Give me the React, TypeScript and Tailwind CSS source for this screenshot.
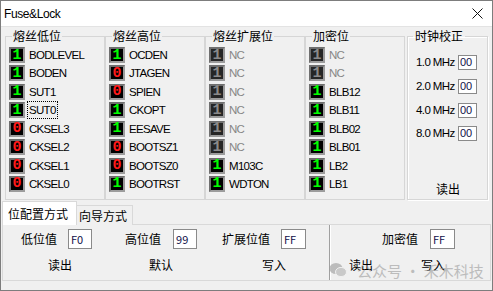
import React from 'react';

type Bit = { name: string; v: 0 | 1; off?: boolean; focus?: boolean };

const UI = '"Liberation Sans", "Noto Sans CJK SC", sans-serif';
const CJK = '"Noto Sans CJK SC", "Liberation Sans", sans-serif';

const GROUPS: { title: string; bits: Bit[] }[] = [
  {
    title: '熔丝低位',
    bits: [
      { name: 'BODLEVEL', v: 1 },
      { name: 'BODEN', v: 1 },
      { name: 'SUT1', v: 1 },
      { name: 'SUT0', v: 1, focus: true },
      { name: 'CKSEL3', v: 0 },
      { name: 'CKSEL2', v: 0 },
      { name: 'CKSEL1', v: 0 },
      { name: 'CKSEL0', v: 0 },
    ],
  },
  {
    title: '熔丝高位',
    bits: [
      { name: 'OCDEN', v: 1 },
      { name: 'JTAGEN', v: 0 },
      { name: 'SPIEN', v: 0 },
      { name: 'CKOPT', v: 1 },
      { name: 'EESAVE', v: 1 },
      { name: 'BOOTSZ1', v: 0 },
      { name: 'BOOTSZ0', v: 0 },
      { name: 'BOOTRST', v: 1 },
    ],
  },
  {
    title: '熔丝扩展位',
    bits: [
      { name: 'NC', v: 1, off: true },
      { name: 'NC', v: 1, off: true },
      { name: 'NC', v: 1, off: true },
      { name: 'NC', v: 1, off: true },
      { name: 'NC', v: 1, off: true },
      { name: 'NC', v: 1, off: true },
      { name: 'M103C', v: 1 },
      { name: 'WDTON', v: 1 },
    ],
  },
  {
    title: '加密位',
    bits: [
      { name: 'NC', v: 1, off: true },
      { name: 'NC', v: 1, off: true },
      { name: 'BLB12', v: 1 },
      { name: 'BLB11', v: 1 },
      { name: 'BLB02', v: 1 },
      { name: 'BLB01', v: 1 },
      { name: 'LB2', v: 1 },
      { name: 'LB1', v: 1 },
    ],
  },
];

const CLOCKS = ['1.0 MHz', '2.0 MHz', '4.0 MHz', '8.0 MHz'];

function BitBox({ b }: { b: Bit }) {
  const color = b.off ? 'text-[#8a8a8a]' : b.v ? 'text-[#00ff00]' : 'text-[#ff1a1a]';
  return (
    <div
      className={`w-[16px] h-[16px] border-2 border-t-[#6f6f6f] border-l-[#6f6f6f] border-b-[#9c9c9c] border-r-[#9c9c9c] flex items-center justify-center ${b.off ? 'bg-[#262626]' : 'bg-black'}`}
    >
      <span className={`text-[15px] leading-none font-bold ${color}`} style={{ fontFamily: '"Liberation Mono", monospace' }}>
        {b.v}
      </span>
    </div>
  );
}

function ValBox({ v, w = 'w-[24px]' }: { v: string; w?: string }) {
  return (
    <div className={`${w} h-[20px] bg-white border border-[#8a8a8a] pl-[2px] flex items-center text-[11px] text-[#10104a]`}>
      {v}
    </div>
  );
}

export default function App() {
  return (
    <div className="w-[493px] h-[291px] bg-[#f0f0f0] border border-[#7d7d7d] relative overflow-hidden text-black" style={{ fontFamily: UI }}>
      {/* title bar */}
      <div className="h-[26px] bg-white flex items-center justify-between pl-[3px] pr-[9px] border-b border-[#e3e3e3]">
        <span className="text-[12px] tracking-[-0.4px]">Fuse&amp;Lock</span>
        <svg width="11" height="11" viewBox="0 0 11 11">
          <path d="M0.5 0.5 L10.5 10.5 M10.5 0.5 L0.5 10.5" stroke="#111" strokeWidth="1" />
        </svg>
      </div>

      {/* groups */}
      <div className="flex mt-[2px] ml-[4px]">
        {GROUPS.map(g => (
          <fieldset key={g.title} className="w-[100px] h-[171px] border border-[#d6d6d6] px-[3px]">
            <legend className="ml-[3px] px-[1px] text-[12px] leading-[14px]" style={{ fontFamily: CJK }}>
              {g.title}
            </legend>
            <div className="mt-[4px]">
              {g.bits.map((b, i) => (
                <div key={i} className="h-[18.43px] flex items-start gap-[4px]">
                  <BitBox b={b} />
                  <span
                    className={`text-[11.5px] leading-[16px] tracking-[-0.7px] px-[1px] -ml-[1px] ${b.off ? 'text-[#868686]' : 'text-black'} ${b.focus ? 'outline outline-1 outline-dotted outline-black' : ''}`}
                  >
                    {b.name}
                  </span>
                </div>
              ))}
            </div>
          </fieldset>
        ))}

        {/* clock calibration */}
        <fieldset className="ml-[2px] w-[81px] h-[171px] border border-[#d6d6d6] shadow-[inset_1px_1px_0_#ffffff,1px_1px_0_#ffffff] pl-[8px] pr-[10px]">
          <legend className="-ml-[3px] px-[2px] text-[12px] leading-[14px]" style={{ fontFamily: CJK }}>
            时钟校正
          </legend>
          <div className="mt-[8px]">
            {CLOCKS.map(c => (
              <div key={c} className="h-[23.67px] flex items-center justify-between">
                <span className="text-[11.5px] tracking-[-0.6px]">{c}</span>
                <div className="w-[19px] h-[15px] bg-white border border-[#8a8a8a] pl-[1px] flex items-center text-[11px] leading-none text-[#10104a]">
                  00
                </div>
              </div>
            ))}
          </div>
          <div className="mt-[35px] ml-[20px] text-[12px] leading-[16px]" style={{ fontFamily: CJK }}>
            读出
          </div>
        </fieldset>
      </div>

      {/* tabs */}
      <div className="flex items-end h-[24px] mt-[1px] ml-[1px] text-[12px]" style={{ fontFamily: CJK }}>
        <div className="w-[75px] h-[24px] bg-white border border-[#d9d9d9] border-b-0 pl-[5px] leading-[24px] relative z-10">
          位配置方式
        </div>
        <div className="w-[56px] h-[20px] bg-[#f0f0f0] border border-[#d9d9d9] border-l-0 border-b-0 pl-[2px] leading-[19px]">
          向导方式
        </div>
      </div>

      {/* tab panel */}
      <div className="ml-[1px] w-[489px] h-[57px] border border-[#d9d9d9] -mt-px flex text-[12px]" style={{ fontFamily: CJK }}>
        <div className="w-[326px]">
          <div className="flex items-center mt-[4px] h-[20px]">
            <span className="ml-[18px]">低位值</span>
            <div className="ml-[11px]"><ValBox v="F0" /></div>
            <span className="ml-[33px]">高位值</span>
            <div className="ml-[12px]"><ValBox v="99" /></div>
            <span className="ml-[25px]">扩展位值</span>
            <div className="ml-[11px]"><ValBox v="FF" w="w-[25px]" /></div>
          </div>
          <div className="flex items-center mt-[8px] leading-[16px]">
            <span className="ml-[45px]">读出</span>
            <span className="ml-[77px]">默认</span>
            <span className="ml-[89px]">写入</span>
          </div>
        </div>
        <div className="w-[2px] h-[55px] border-l border-[#a0a0a0] bg-white" />
        <div className="flex-1">
          <div className="flex items-center mt-[4px] h-[20px]">
            <span className="ml-[51px]">加密值</span>
            <div className="ml-[12px]"><ValBox v="FF" w="w-[25px]" /></div>
          </div>
          <div className="flex items-center mt-[8px] leading-[16px]">
            <span className="ml-[18px]">读出</span>
            <span className="ml-[48px]">写入</span>
          </div>
        </div>
      </div>

      {/* watermark overlay */}
      <div className="absolute left-[328px] top-[261px] flex items-center gap-[10px] opacity-60 pointer-events-none">
        <svg width="18" height="16" viewBox="0 0 18 16">
          <ellipse cx="7" cy="6.5" rx="6.5" ry="5.5" fill="#9a9a9a" />
          <ellipse cx="12" cy="10" rx="5.5" ry="4.6" fill="#b0b0b0" stroke="#f0f0f0" strokeWidth="1" />
        </svg>
        <span className="text-[15px] text-[#9a9a9a] leading-none" style={{ fontFamily: CJK }}>
          公众号 · 禾木科技
        </span>
      </div>
    </div>
  );
}
